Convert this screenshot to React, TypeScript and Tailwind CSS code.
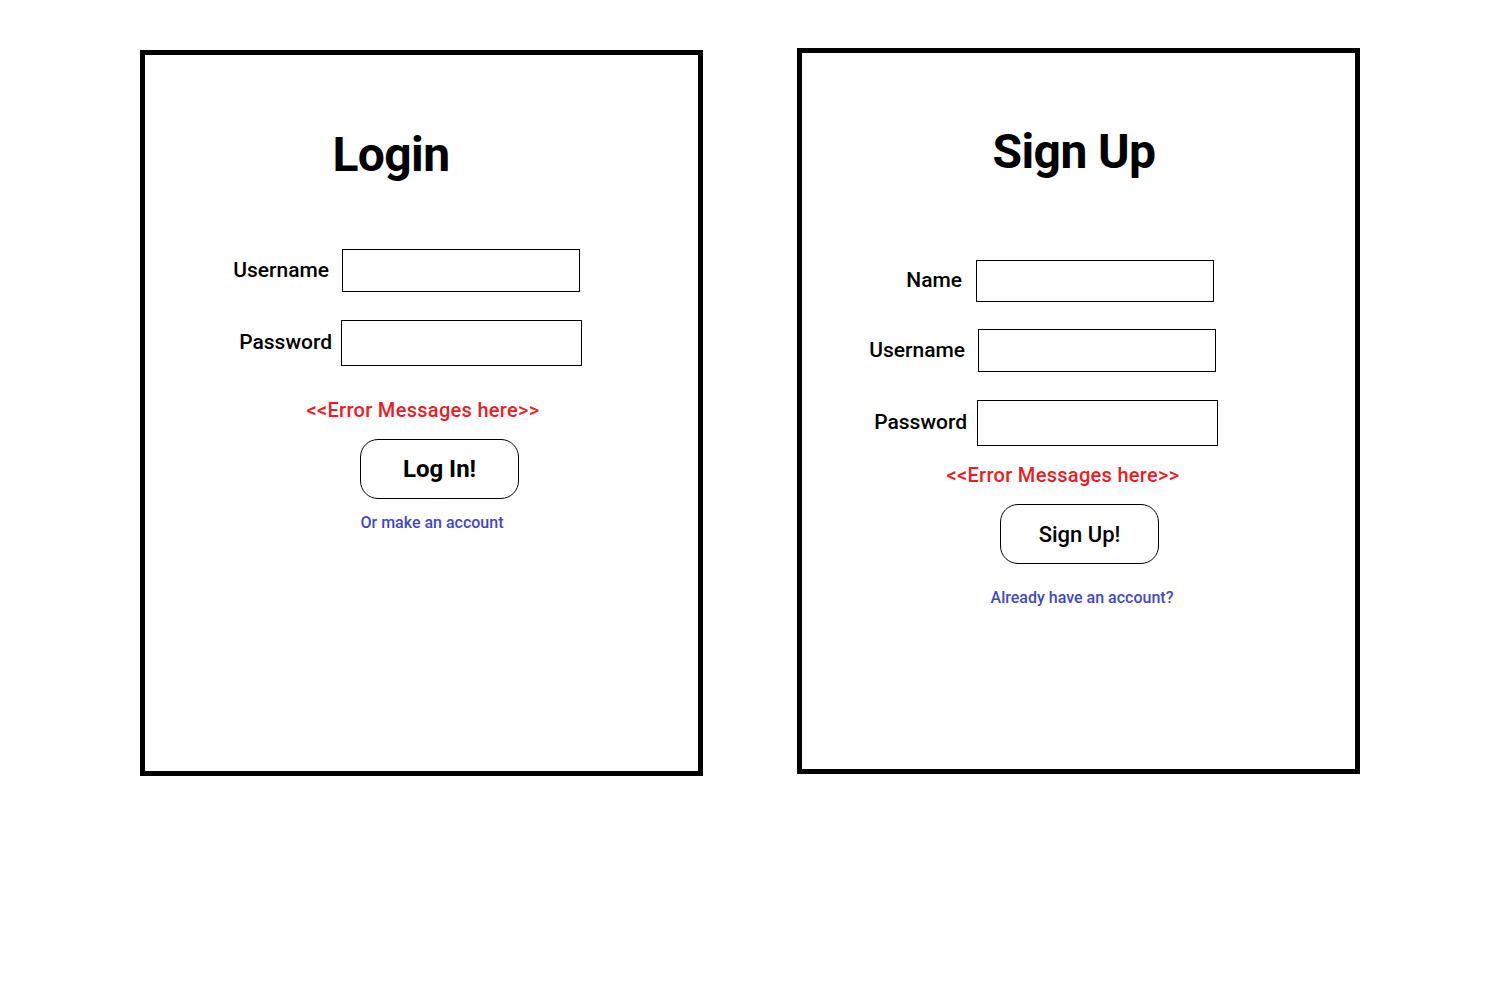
import React from 'react'

const font = { fontFamily: 'Roboto, "Noto Sans", sans-serif' }

const App: React.FC = () => {
  return (
    <div className="min-h-screen w-full bg-white text-black" style={font}>
      <div className="flex items-start pt-[48px] pl-[140px] gap-[94px]">
        {/* Login card */}
        <div className="mt-[2px] w-[563px] h-[726px] border-[5px] border-black flex flex-col items-start">
          <h1 className="mt-[75px] ml-[146px] w-[200px] text-center text-[48px] leading-[50px] font-bold tracking-[-0.6px]">
            Login
          </h1>

          <div className="mt-[69px] flex items-center">
            <label className="w-[184px] text-right text-[21px] font-medium">Username</label>
            <input className="ml-[13px] w-[238px] h-[43px] border border-black outline-none" />
          </div>

          <div className="mt-[28px] flex items-center">
            <label className="w-[187px] text-right text-[21px] font-medium">Password</label>
            <input type="password" className="ml-[9px] w-[241px] h-[46px] border border-black outline-none" />
          </div>

          <p className="mt-[32px] ml-[128px] w-[300px] text-center text-[20px] leading-[24px] font-medium tracking-[0.3px] text-[#ed1c24]">
            &lt;&lt;Error Messages here&gt;&gt;
          </p>

          <button className="mt-[17px] ml-[215px] w-[159px] h-[60px] border border-black rounded-[18px] text-[24px] font-bold">
            Log In!
          </button>

          <a className="mt-[14px] ml-[187px] w-[200px] text-center text-[16px] leading-[20px] font-medium text-[#3f48cc]">
            Or make an account
          </a>
        </div>

        {/* Sign up card */}
        <div className="w-[563px] h-[726px] border-[5px] border-black flex flex-col items-start">
          <h1 className="mt-[74px] ml-[172px] w-[200px] text-center text-[48px] leading-[50px] font-bold tracking-[-0.6px]">
            Sign Up
          </h1>

          <div className="mt-[83px] flex items-center">
            <label className="w-[160px] text-right text-[21px] font-medium">Name</label>
            <input className="ml-[14px] w-[238px] h-[42px] border border-black outline-none" />
          </div>

          <div className="mt-[27px] flex items-center">
            <label className="w-[163px] text-right text-[21px] font-medium">Username</label>
            <input className="ml-[13px] w-[238px] h-[43px] border border-black outline-none" />
          </div>

          <div className="mt-[28px] flex items-center">
            <label className="w-[165px] text-right text-[21px] font-medium">Password</label>
            <input type="password" className="ml-[10px] w-[241px] h-[46px] border border-black outline-none" />
          </div>

          <p className="mt-[17px] ml-[111px] w-[300px] text-center text-[20px] leading-[24px] font-medium tracking-[0.3px] text-[#ed1c24]">
            &lt;&lt;Error Messages here&gt;&gt;
          </p>

          <button className="mt-[17px] ml-[198px] w-[159px] h-[60px] border border-black rounded-[18px] text-[22px] font-medium">
            Sign Up!
          </button>

          <a className="mt-[24px] ml-[180px] w-[200px] text-center text-[16px] leading-[20px] font-medium text-[#3f48cc]">
            Already have an account?
          </a>
        </div>
      </div>
    </div>
  )
}

export default App
